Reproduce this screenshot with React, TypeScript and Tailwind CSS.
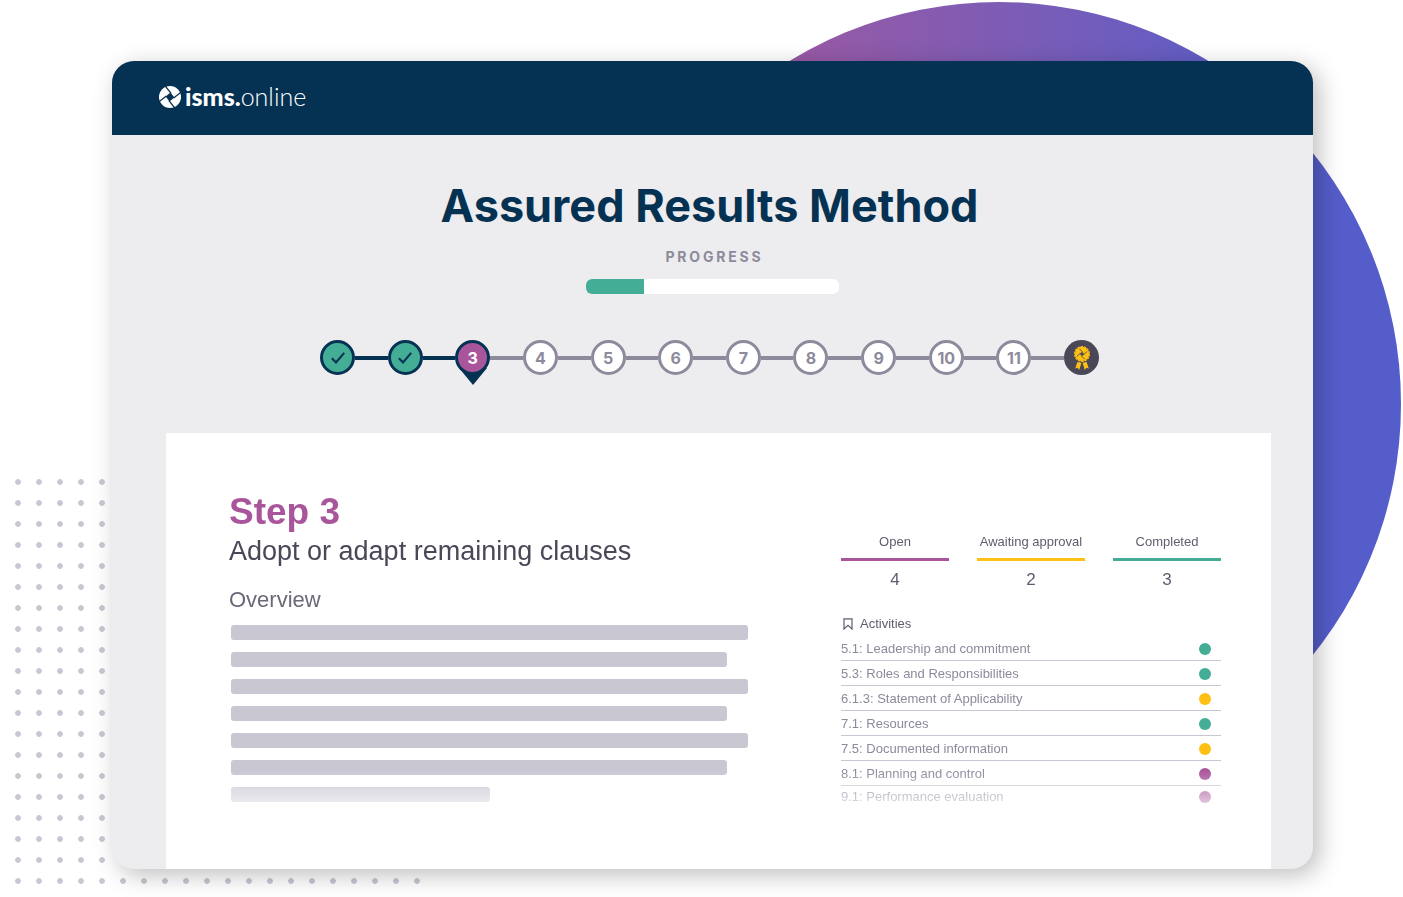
type StepState = 'done' | 'current' | 'todo' | 'award';

const steps: { label: string; state: StepState }[] = [
  { label: '1', state: 'done' },
  { label: '2', state: 'done' },
  { label: '3', state: 'current' },
  { label: '4', state: 'todo' },
  { label: '5', state: 'todo' },
  { label: '6', state: 'todo' },
  { label: '7', state: 'todo' },
  { label: '8', state: 'todo' },
  { label: '9', state: 'todo' },
  { label: '10', state: 'todo' },
  { label: '11', state: 'todo' },
  { label: 'Certified', state: 'award' },
];

const stats = [
  { label: 'Open', value: 4, line: 'bg-[#a8559b]' },
  { label: 'Awaiting approval', value: 2, line: 'bg-[#ffc014]' },
  { label: 'Completed', value: 3, line: 'bg-[#46ab94]' },
];

const activities = [
  { name: '5.1: Leadership and commitment', dot: 'bg-[#44ad96]' },
  { name: '5.3: Roles and Responsibilities', dot: 'bg-[#44ad96]' },
  { name: '6.1.3: Statement of Applicability', dot: 'bg-[#ffc014]' },
  { name: '7.1: Resources', dot: 'bg-[#44ad96]' },
  { name: '7.5: Documented information', dot: 'bg-[#ffc014]' },
  { name: '8.1: Planning and control', dot: 'bg-[#a8559b]' },
  { name: '9.1: Performance evaluation', dot: 'bg-[#a8559b]' },
];

const lines = ['w-full', 'w-24/25', 'w-full', 'w-24/25', 'w-full', 'w-24/25', 'w-1/2'];

const blades = [0, 90, 180, 270];

function Aperture() {
  return (
    <svg viewBox="-12 -12 24 24" className="size-[22px]" aria-hidden="true">
      <circle r="12" fill="currentColor" />
      <path d="M.5-4.8 4.8.5-.5 4.8-4.8-.5Z" fill="#053253" />
      {blades.map((a) => (
        <path key={a} d="M-5.2-12 1.2-4" transform={`rotate(${a})`} fill="none" stroke="#053253" strokeWidth="1.4" />
      ))}
    </svg>
  );
}

function Award() {
  return (
    <svg viewBox="-9 -9 18 26" className="h-[26px] w-[18px] text-[#ffc014]" aria-hidden="true">
      <path d="M-4.6 8-6.8 14.4-4.4 13.8-2.8 16-.6 8.8ZM4.6 8 6.8 14.4 4.4 13.8 2.8 16 .6 8.8Z" fill="currentColor" />
      <circle r="7.2" fill="currentColor" />
      <circle r="7.4" fill="none" stroke="currentColor" strokeWidth="1.2" strokeDasharray="2.4 .92" />
      <path d="M.2-2.2 2.2.2-.2 2.2-2.2-.2Z" fill="#4a4757" />
      {blades.map((a) => (
        <path key={a} d="M-2.6-5.2.6-1.9" transform={`rotate(${a})`} fill="none" stroke="#4a4757" strokeWidth=".9" />
      ))}
    </svg>
  );
}

function StepMark({ label, state }: { label: string; state: StepState }) {
  const base = 'relative flex size-[35px] shrink-0 items-center justify-center rounded-full text-base font-bold ';
  if (state === 'done')
    return (
      <span className={base + 'border-3 border-[#053253] bg-[#44ad96]'}>
        <svg viewBox="0 0 14 12" className="h-3 w-3.5" role="img" aria-label={`Step ${label} done`}>
          <path d="M.9 6.2 5 10.4 13.2.9" fill="none" stroke="#053253" strokeWidth="2.1" />
        </svg>
      </span>
    );
  if (state === 'current')
    return (
      <span className="relative shrink-0" aria-current="step">
        <svg viewBox="0 0 28 17" className="absolute top-7 left-1/2 h-[17px] w-7 -translate-x-1/2" aria-hidden="true">
          <path d="M0 0H28L14 17Z" fill="#053253" />
        </svg>
        <span className={base + 'border-3 border-[#053253] bg-[#a8559b] text-white'}>{label}</span>
      </span>
    );
  if (state === 'award')
    return (
      <span className={base + 'bg-[#4a4757]'}>
        <Award />
      </span>
    );
  return <span className={base + 'border-3 border-[#8c8a9b] bg-white text-[#8c8a9b]'}>{label}</span>;
}

export default function App() {
  return (
    <div className="relative min-h-screen overflow-hidden bg-white pt-[61px] pr-[90px] pb-7 pl-28 font-['Liberation_Sans',Arial,sans-serif]">
      <div className="absolute top-[2px] right-[2px] size-[804px] rounded-full bg-linear-to-r from-[#b05295] to-[#555dca] to-85%" />
      <div className="absolute top-[471px] left-[7px] size-[420px] bg-[radial-gradient(circle_at_11px_11px,#c8c7d2_2.5px,transparent_3.2px)] bg-size-[21px_21px]" />

      <main className="relative rounded-[22px] bg-[#ededef] shadow-[6px_6px_24px_rgba(0,0,0,0.26)]">
        <header className="flex h-[74px] items-center rounded-t-[22px] bg-[#053253] px-[47px] pb-0.5 text-white">
          <a href="#home" className="flex items-center gap-1 font-['Lato',sans-serif] text-[25px] leading-none">
            <Aperture />
            <span className="pb-0.5">
              <span className="font-black">isms.</span>
              <span className="font-light">online</span>
            </span>
          </a>
        </header>

        <section className="flex flex-col items-center px-13 font-['Inter',sans-serif]">
          <h1 className="mt-[43px] mr-1.5 text-[45px] leading-14 font-bold text-[#053253]">Assured Results Method</h1>
          <h2 className="mt-[13px] pl-1 text-sm leading-5 font-bold tracking-[0.2em] text-[#8c8a9b]">PROGRESS</h2>
          <div
            role="progressbar"
            aria-label="Progress"
            aria-valuenow={23}
            className="mt-3 h-[15px] w-[253px] overflow-hidden rounded-[6px] bg-white"
          >
            <div className="h-full w-[23%] bg-[#44ad96]" />
          </div>
          <ol className="mt-[46px] mr-1.5 flex w-full max-w-[779px] items-center">
            {steps.map((s, i) => (
              <li key={s.label} className={i ? 'flex flex-1 items-center' : 'flex items-center'}>
                {i > 0 && <span className={i < 3 ? 'h-1 flex-1 bg-[#053253]' : 'h-1 flex-1 bg-[#8c8a9b]'} />}
                <StepMark label={s.label} state={s.state} />
              </li>
            ))}
          </ol>
        </section>

        <section className="mt-[58px] mr-[42px] ml-[54px] flex justify-between gap-12 bg-white pt-[59px] pr-[50px] pb-[66px] pl-[63px]">
          <div className="max-w-[519px] flex-1 mask-[linear-gradient(to_bottom,#000_calc(100%-33px),rgba(0,0,0,0.35))]">
            <h2 className="text-[37px] leading-10 font-bold text-[#a8559b]">Step 3</h2>
            <p className="mt-px text-[27px] leading-9 text-[#4a4757]">Adopt or adapt remaining clauses</p>
            <h3 className="mt-[17px] text-[22px] leading-7 text-[#6b6979]">Overview</h3>
            <div className="mt-[11px] ml-0.5 flex flex-col gap-3">
              {lines.map((w, i) => (
                <div key={i} className={w + ' h-[15px] rounded-[3px] bg-[#c8c7d2]'} />
              ))}
            </div>
          </div>

          <aside className="w-[380px] shrink-0 pt-[42px] text-[13px] text-[#5f5d6e] mask-[linear-gradient(to_bottom,#000_calc(100%-33px),rgba(0,0,0,0.35))]">
            <dl className="grid grid-cols-3 gap-7 text-center">
              {stats.map((s) => (
                <div key={s.label}>
                  <dt className="leading-4 whitespace-nowrap">{s.label}</dt>
                  <div className={'mt-2 h-[3px] ' + s.line} />
                  <dd className="mt-[9px] text-[17px] leading-5">{s.value}</dd>
                </div>
              ))}
            </dl>
            <h3 className="mt-[26px] flex items-center gap-[7px] pl-0.5 leading-4">
              <svg viewBox="0 0 10 12" className="h-3 w-2.5" aria-hidden="true">
                <path d="M1 .8H9V11L5 7.4 1 11Z" fill="none" stroke="currentColor" strokeWidth="1.2" />
              </svg>
              Activities
            </h3>
            <ul className="mt-1 leading-4 text-[#8c8a9b]">
              {activities.map((a) => (
                <li
                  key={a.name}
                  className="flex h-[25px] justify-between border-b border-[#c8c7d2] pt-[5px] pr-2.5 last:h-[17px] last:border-0 last:pt-[3px]"
                >
                  {a.name}
                  <span className={'mt-0.5 size-3 rounded-full ' + a.dot} />
                </li>
              ))}
            </ul>
          </aside>
        </section>
      </main>
    </div>
  );
}
